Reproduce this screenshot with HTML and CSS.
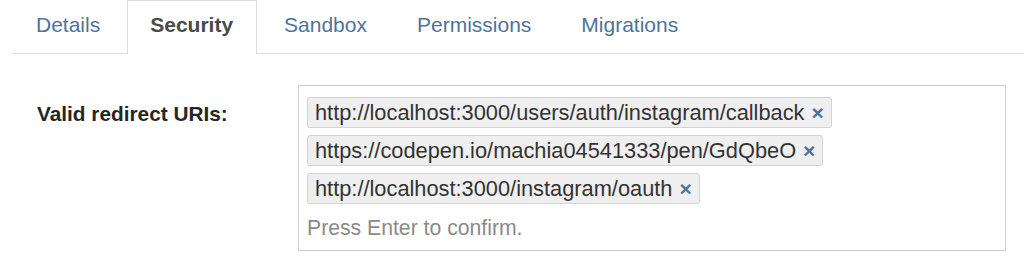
FILE: index.html
```html
<!DOCTYPE html>
<html lang="en">
<head>
  <meta charset="UTF-8" />
  <title>App settings</title>
  <link rel="stylesheet" href="styles.css">
</head>
<body>
  <ul class="tabs">
    <li class="tab"><a href="#">Details</a></li>
    <li class="tab active"><a href="#">Security</a></li>
    <li class="tab"><a href="#">Sandbox</a></li>
    <li class="tab"><a href="#">Permissions</a></li>
    <li class="tab"><a href="#">Migrations</a></li>
  </ul>

  <div class="field">
    <label class="field-label" for="redirectInput">Valid redirect URIs:</label>
    <div class="tags-input">
      <span class="tag">http://localhost:3000/users/auth/instagram/callback <button class="tag-remove">×</button></span>
      <span class="tag">https://codepen.io/machia04541333/pen/GdQbeO <button class="tag-remove">×</button></span>
      <span class="tag">http://localhost:3000/instagram/oauth <button class="tag-remove">×</button></span>
      <input type="text" id="redirectInput" placeholder="Press Enter to confirm." />
    </div>
  </div>
</body>
</html>
```

FILE: styles.css
```css
body {
  font-family: 'Liberation Sans', Arial, sans-serif;
  background-color: #fff;
  margin: 0;
  padding: 0;
  color: #333;
}

.tabs {
  display: flex;
  list-style: none;
  margin: 0 0 0 13px;
  padding: 0;
  height: 54px;
  box-sizing: border-box;
  border-bottom: 1px solid #dcdcdc;
}

.tab {
  display: flex;
  align-items: center;
  box-sizing: border-box;
  height: 54px;
  padding: 0 22px 5px;
  margin-right: 4px;
  border: 1px solid transparent;
  border-bottom: none;
  font-size: 21px;
}

.tab a {
  color: #4f739b;
  text-decoration: none;
}

.tab.active {
  background: #fff;
  border-color: #dcdcdc;
  padding-right: 23px;
}

.tab.active a {
  color: #4a4a4a;
  font-weight: bold;
}

.field {
  display: flex;
  padding: 31px 18px 0 37px;
}

.field-label {
  width: 261px;
  flex-shrink: 0;
  padding-top: 17px;
  font-size: 20.8px;
  font-weight: bold;
  color: #262626;
}

.tags-input {
  flex: 1;
  display: flex;
  flex-direction: column;
  align-items: flex-start;
  gap: 7px;
  border: 1px solid #cfcfcf;
  padding: 11px 8px 10px;
}

.tag {
  display: flex;
  align-items: center;
  height: 29px;
  padding: 0 7px;
  background: #efefef;
  border: 1px solid #d2d2d2;
  border-radius: 3px;
  font-size: 21.8px;
  color: #333;
}

.tag-remove {
  background: none;
  border: none;
  padding: 0;
  margin-left: 7px;
  color: #4f739b;
  font-size: 21px;
  font-weight: bold;
  font-family: inherit;
  line-height: 1;
  cursor: pointer;
}

.tags-input input {
  border: none;
  outline: none;
  padding: 5px 0 0;
  font-family: inherit;
  font-size: 21.2px;
  color: #333;
  width: 100%;
}

.tags-input input::placeholder {
  color: #8a8a8a;
}
```
